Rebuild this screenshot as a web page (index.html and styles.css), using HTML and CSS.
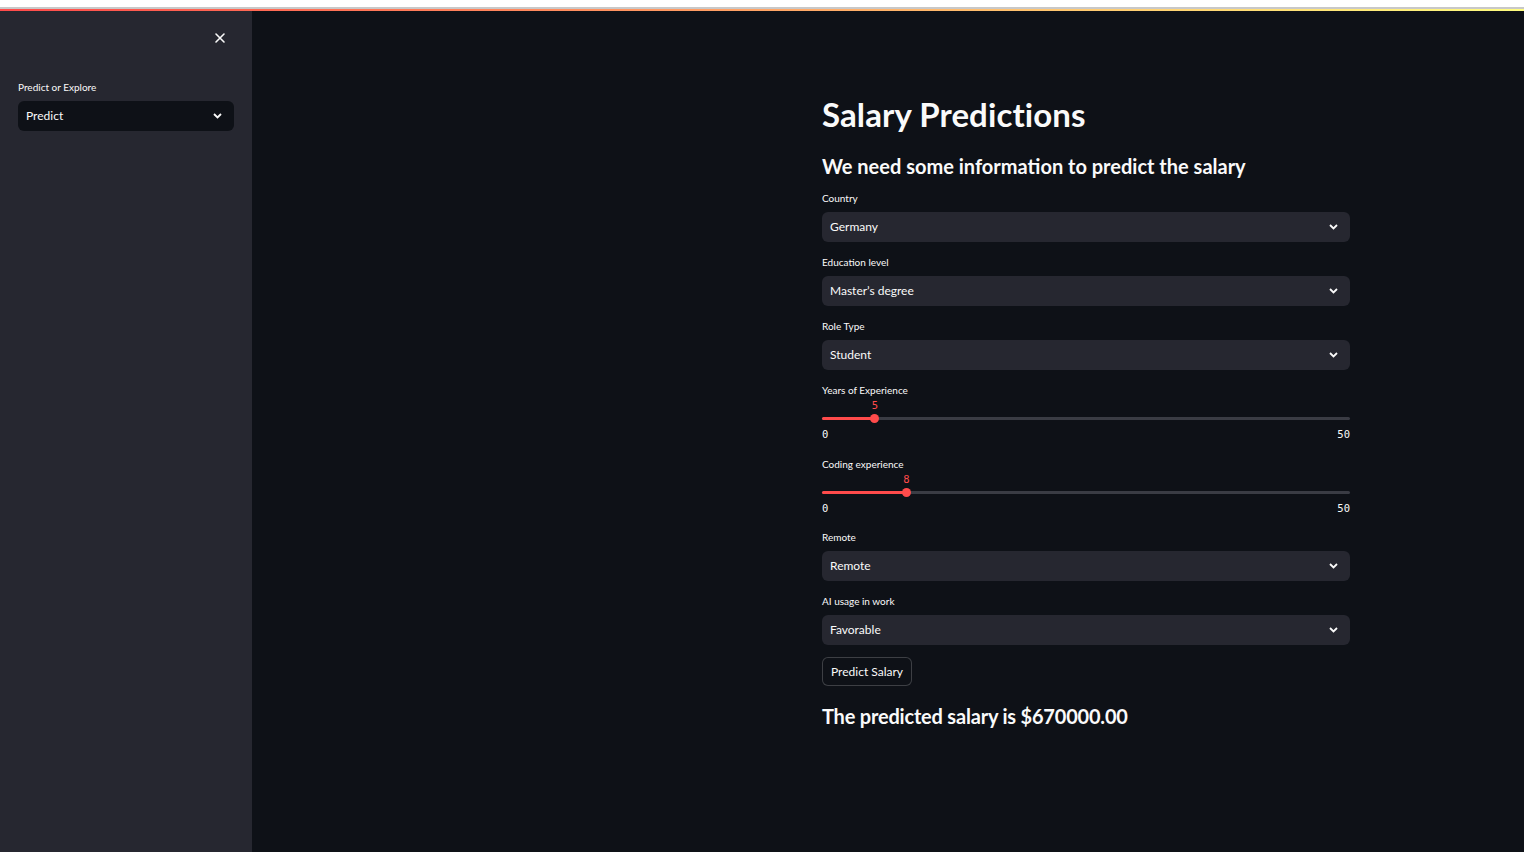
FILE: index.html
```html
<!DOCTYPE html>
<html lang="en">
<head>
<meta charset="utf-8">
<title>Salary Predictions</title>
<link rel="stylesheet" href="styles.css">
</head>
<body>
<div class="topstrip"></div>
<div class="topline"></div>
<div class="decoration"></div>
<div class="app">
  <aside class="sidebar">
    <div class="sidebar-head">
      <button class="close-btn" aria-label="Close sidebar">
        <svg width="12" height="12" viewBox="0 0 12 12"><path d="M2 2 L10 10 M10 2 L2 10" stroke="#fafafa" stroke-width="1.6" stroke-linecap="round"/></svg>
      </button>
    </div>
    <div class="widget">
      <div class="label">Predict or Explore</div>
      <div class="select select-dark">
        <span>Predict</span>
        <svg class="chev" width="9" height="6" viewBox="0 0 9 6"><path d="M1 1 L4.5 4.5 L8 1" fill="none" stroke="#fafafa" stroke-width="1.8"/></svg>
      </div>
    </div>
  </aside>
  <main class="main">
    <div class="block">
      <h1 class="title">Salary Predictions</h1>
      <h3 class="subtitle">We need some information to predict the salary</h3>

      <div class="widget">
        <div class="label">Country</div>
        <div class="select"><span>Germany</span><svg class="chev" width="9" height="6" viewBox="0 0 9 6"><path d="M1 1 L4.5 4.5 L8 1" fill="none" stroke="#fafafa" stroke-width="1.8"/></svg></div>
      </div>

      <div class="widget">
        <div class="label">Education level</div>
        <div class="select"><span>Master’s degree</span><svg class="chev" width="9" height="6" viewBox="0 0 9 6"><path d="M1 1 L4.5 4.5 L8 1" fill="none" stroke="#fafafa" stroke-width="1.8"/></svg></div>
      </div>

      <div class="widget">
        <div class="label">Role Type</div>
        <div class="select"><span>Student</span><svg class="chev" width="9" height="6" viewBox="0 0 9 6"><path d="M1 1 L4.5 4.5 L8 1" fill="none" stroke="#fafafa" stroke-width="1.8"/></svg></div>
      </div>

      <div class="widget">
        <div class="label">Years of Experience</div>
        <div class="slider">
          <div class="track">
            <div class="fill" style="width:10%"></div>
            <div class="thumb" style="left:10%"><span class="thumb-value">5</span></div>
          </div>
          <div class="ticks"><span>0</span><span>50</span></div>
        </div>
      </div>

      <div class="widget">
        <div class="label">Coding experience</div>
        <div class="slider">
          <div class="track">
            <div class="fill" style="width:16%"></div>
            <div class="thumb" style="left:16%"><span class="thumb-value">8</span></div>
          </div>
          <div class="ticks"><span>0</span><span>50</span></div>
        </div>
      </div>

      <div class="widget">
        <div class="label">Remote</div>
        <div class="select"><span>Remote</span><svg class="chev" width="9" height="6" viewBox="0 0 9 6"><path d="M1 1 L4.5 4.5 L8 1" fill="none" stroke="#fafafa" stroke-width="1.8"/></svg></div>
      </div>

      <div class="widget">
        <div class="label">AI usage in work</div>
        <div class="select"><span>Favorable</span><svg class="chev" width="9" height="6" viewBox="0 0 9 6"><path d="M1 1 L4.5 4.5 L8 1" fill="none" stroke="#fafafa" stroke-width="1.8"/></svg></div>
      </div>

      <div class="widget">
        <button class="btn">Predict Salary</button>
      </div>

      <h3 class="result">The predicted salary is $670000.00</h3>
    </div>
  </main>
</div>
</body>
</html>
```

FILE: styles.css
```css
* { box-sizing: border-box; }
html, body {
  margin: 0;
  padding: 0;
  height: 852px;
  overflow: hidden;
  background: #0e1117;
  font-family: "Lato", "Liberation Sans", sans-serif;
  color: #fafafa;
}
.topstrip { height: 7px; background: #ffffff; }
.topline { height: 2px; background: #c8c8c8; }
.decoration {
  height: 2px;
  background: linear-gradient(90deg, #ff4b4b, #fffd80);
}
.app {
  display: flex;
  height: 841px;
}
.sidebar {
  width: 252px;
  flex: 0 0 252px;
  background: #262730;
  padding: 0 18px;
}
.sidebar-head {
  display: flex;
  justify-content: flex-end;
  padding-top: 19px;
  height: 68px;
}
.close-btn {
  background: none;
  border: none;
  padding: 0;
  width: 20px;
  height: 14px;
  display: flex;
  align-items: center;
  justify-content: center;
  margin-right: 4px;
  margin-top: 1px;
}
.main {
  flex: 1;
  padding-left: 570px;
}
.block {
  width: 528px;
  display: flex;
  flex-direction: column;
}
.title {
  margin: 0;
  padding-top: 81px;
  font-size: 33px;
  line-height: 44px;
  font-weight: 700;
  letter-spacing: 0.1px;
  height: 140px;
}
.subtitle {
  margin: 0;
  font-size: 20px;
  line-height: 30px;
  font-weight: 700;
  height: 39px;
}
.widget {
  display: flex;
  flex-direction: column;
  margin-bottom: 12px;
}
.label {
  font-size: 10px;
  line-height: 16px;
  height: 22px;
}
.select {
  height: 30px;
  background: #262730;
  border-radius: 6px;
  display: flex;
  align-items: center;
  justify-content: space-between;
  padding: 0 12px 1px 8px;
  font-size: 12px;
}
.select-dark { background: #0e1117; }
.chev { display: block; }
.slider {
  height: 39.5px;
  position: relative;
}
.track {
  position: relative;
  margin-top: 13px;
  height: 3px;
  border-radius: 2px;
  background: #3a3c44;
}
.fill {
  height: 3px;
  border-radius: 2px;
  background: #ff4b4b;
}
.thumb {
  position: absolute;
  top: -3px;
  width: 9px;
  height: 9px;
  margin-left: -4.5px;
  border-radius: 50%;
  background: #ff4b4b;
}
.thumb-value {
  position: absolute;
  bottom: 12px;
  left: 50%;
  transform: translateX(-50%);
  font-family: "DejaVu Sans Mono", "Liberation Mono", monospace;
  font-size: 10.5px;
  line-height: 12px;
  color: #ff4b4b;
}
.ticks {
  display: flex;
  justify-content: space-between;
  margin-top: 8px;
  font-family: "DejaVu Sans Mono", "Liberation Mono", monospace;
  font-size: 10.5px;
  line-height: 12px;
}
.btn {
  align-self: flex-start;
  height: 29px;
  padding: 0 8px;
  background: #0e1117;
  color: #fafafa;
  border: 1px solid rgba(250, 250, 250, 0.2);
  border-radius: 6px;
  font-family: inherit;
  font-size: 12px;
}
.result {
  margin: 0;
  font-size: 20px;
  line-height: 36px;
  font-weight: 700;
  letter-spacing: -0.2px;
}
```
